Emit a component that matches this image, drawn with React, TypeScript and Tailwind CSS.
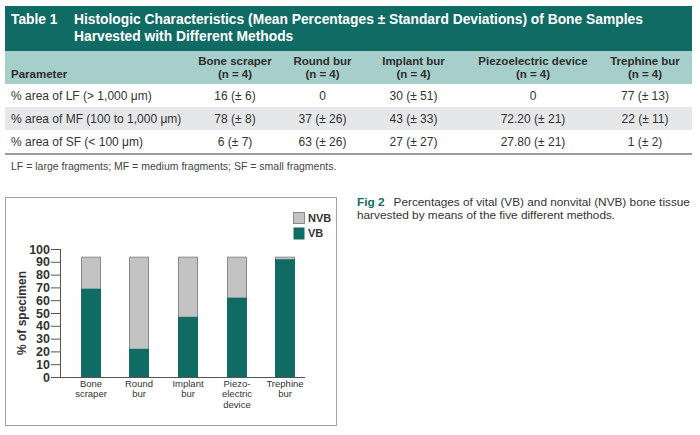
const TEAL = '#0f6b63'

const rows = [
  ['% area of LF (> 1,000 μm)', '16 (± 6)', '0', '30 (± 51)', '0', '77 (± 13)'],
  ['% area of MF (100 to 1,000 μm)', '78 (± 8)', '37 (± 26)', '43 (± 33)', '72.20 (± 21)', '22 (± 11)'],
  ['% area of SF (< 100 μm)', '6 (± 7)', '63 (± 26)', '27 (± 27)', '27.80 (± 21)', '1 (± 2)'],
]

const columns = ['Bone scraper', 'Round bur', 'Implant bur', 'Piezoelectric device', 'Trephine bur']

// chart geometry, in page pixels
const BASE = 377
const PX_PER_PCT = 1.28
const bars = [
  { x: 81, vb: 69, label: ['Bone', 'scraper'] },
  { x: 129, vb: 22, label: ['Round', 'bur'] },
  { x: 178, vb: 47, label: ['Implant', 'bur'] },
  { x: 227, vb: 62, label: ['Piezo-', 'electric', 'device'] },
  { x: 275, vb: 92, label: ['Trephine', 'bur'] },
]
const TOTAL = 94

function BarChart() {
  const y = (v: number) => BASE - v * PX_PER_PCT
  return (
    <svg width={330} height={227} viewBox="6 198 330 227" className="block">
      {/* legend */}
      <rect x={293.5} y={212.5} width={11} height={11} fill="#c3c3c3" stroke="#8a8a8a" />
      <rect x={293.5} y={227.5} width={11} height={12} fill={TEAL} />
      <text x={308} y={222} fontSize={11} fontWeight={700} fill="#333">NVB</text>
      <text x={308} y={237} fontSize={11} fontWeight={700} fill="#333">VB</text>

      {/* y axis */}
      <line x1={60.5} y1={y(100)} x2={60.5} y2={BASE} stroke="#555" />
      {Array.from({ length: 11 }, (_, i) => (
        <g key={i}>
          <line x1={51} y1={y(i * 10) + 0.5} x2={60} y2={y(i * 10) + 0.5} stroke="#555" />
          <text
            x={50}
            y={y(i * 10) + 4.5}
            textAnchor="end"
            fontSize={12.5}
            fontWeight={700}
            fill="#333"
          >
            {i * 10}
          </text>
        </g>
      ))}
      <text
        transform="translate(26 313) rotate(-90)"
        textAnchor="middle"
        fontSize={12}
        fontWeight={700}
        fill="#333"
      >
        % of specimen
      </text>

      {/* bars */}
      {bars.map((b) => (
        <g key={b.x}>
          <rect
            x={b.x + 0.5}
            y={y(TOTAL) + 0.5}
            width={19}
            height={BASE - y(TOTAL)}
            fill="#c3c3c3"
            stroke="#8a8a8a"
          />
          <rect x={b.x} y={y(b.vb)} width={20} height={BASE - y(b.vb)} fill={TEAL} />
          {b.label.map((l, i) => (
            <text
              key={l}
              x={b.x + 10}
              y={386.5 + i * 10.5}
              textAnchor="middle"
              fontSize={9.5}
              fill="#333"
            >
              {l}
            </text>
          ))}
        </g>
      ))}

      {/* baseline */}
      <line x1={60} y1={BASE + 0.5} x2={305} y2={BASE + 0.5} stroke="#555" />
    </svg>
  )
}

export default function App() {
  return (
    <div className="w-[700px] h-[435px] bg-white overflow-hidden font-['Liberation_Sans',Arial,sans-serif] text-[#333]">
      <div className="ml-[5px] pt-[6px] w-[687px]">
        <div className="h-[45px] bg-[#0f6b63] flex pt-[5px] text-white font-bold text-[13.8px] leading-[17px]">
          <div className="w-[69px] pl-[6px] shrink-0">Table 1</div>
          <div>
            Histologic Characteristics (Mean Percentages ± Standard Deviations) of Bone Samples
            <br />
            Harvested with Different Methods
          </div>
        </div>

        <div className="h-[33px] bg-[#a6cecb] grid grid-cols-[185px_90px_85px_97px_142px_88px] items-end pb-[3px] text-[11.5px] font-bold leading-[13px] text-[#2d2d2d]">
          <div className="pl-[6px]">Parameter</div>
          {columns.map((c, i) => (
            <div key={c} className={i === 4 ? 'text-center pr-[6px]' : 'text-center'}>
              {c}
              <br />
              (n = 4)
            </div>
          ))}
        </div>

        {rows.map((r, ri) => (
          <div
            key={r[0]}
            className={
              'h-[23px] grid grid-cols-[185px_90px_85px_97px_142px_88px] items-center text-[12px] ' +
              (ri === 1 ? 'bg-[#e6e7e8]' : 'bg-white')
            }
          >
            {r.map((cell, ci) => (
              <div
                key={ci}
                className={ci === 0 ? 'pl-[6px]' : ci === 5 ? 'text-center pr-[6px]' : 'text-center'}
              >
                {cell}
              </div>
            ))}
          </div>
        ))}
        <div className="h-[2px] bg-[#9c9c9c]" />
      </div>

      <p className="ml-[11px] mt-[5px] text-[10.5px] leading-[13px] text-[#444]">
        LF = large fragments; MF = medium fragments; SF = small fragments.
      </p>

      <div className="flex ml-[5px] mt-[24px] gap-[20px]">
        <div className="w-[332px] h-[229px] border border-[#a3a3a3] shrink-0">
          <BarChart />
        </div>
        <p className="mt-[-1px] text-[11.8px] leading-[12.5px] text-[#333] whitespace-nowrap">
          <span className="font-bold text-[#0f6b63]">Fig 2</span>
          <span className="ml-[9px]">Percentages of vital (VB) and nonvital (NVB) bone tissue</span>
          <br />
          harvested by means of the five different methods.
        </p>
      </div>
    </div>
  )
}
